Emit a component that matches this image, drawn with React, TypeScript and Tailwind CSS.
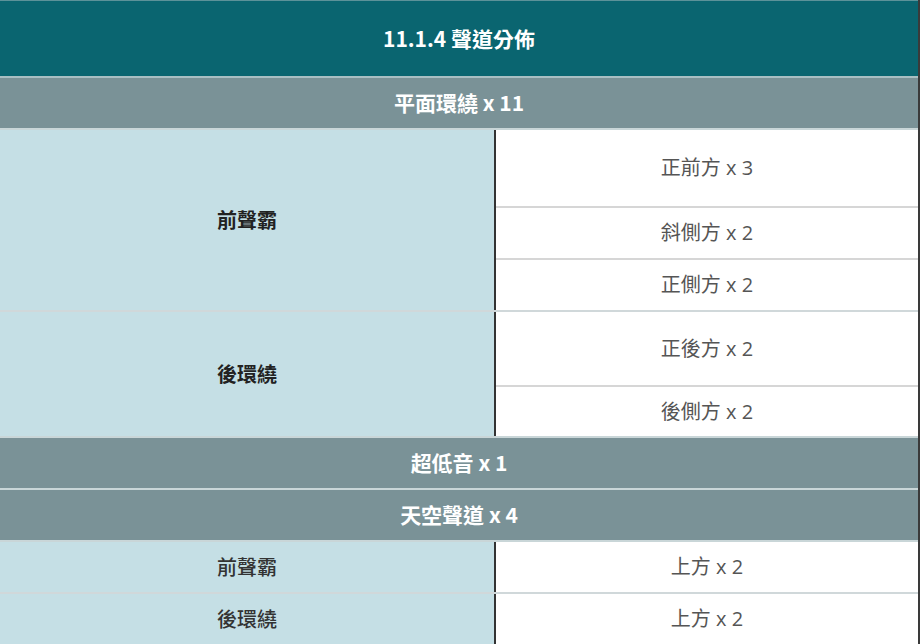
import React from "react";

const font = { fontFamily: '"Noto Sans CJK TC", "Noto Sans", sans-serif' };
const openFont = { fontFamily: '"Open Sans", "Noto Sans CJK TC", sans-serif' };

function Band({ text, h }: { text: string; h: string }) {
  return (
    <div className={`flex items-center justify-center bg-[#7a9297] border-b-2 border-[#c9d6d8] text-white font-bold text-[21px] ${h}`}>
      {text}
    </div>
  );
}

function RightCell({ text, h, last }: { text: string; h: string; last?: boolean }) {
  return (
    <div
      className={`flex items-center justify-center text-[#555] text-[20px] ${h} ${last ? "" : "border-b-2 border-[#d6d6d6]"}`}
      style={openFont}
    >
      {text}
    </div>
  );
}

export default function App() {
  return (
    <div className="w-[920px] h-[644px] overflow-hidden bg-white" style={font}>
      <div className="flex flex-col border-r-2 border-[#3a3a3a]">
        <div className="h-[78px] flex items-center justify-center bg-[#0a6570] border-t border-[#5c9299] border-b-2 border-b-[#a9bfc3] text-white font-bold text-[21px]">
          11.1.4 聲道分佈
        </div>
        <Band text="平面環繞 x 11" h="h-[52px]" />
        <div className="flex border-b-2 border-[#d0d8da]">
          <div className="w-[496px] shrink-0 bg-[#c5dfe5] border-r-2 border-[#333] flex items-center justify-center font-bold text-[#222] text-[20px]">
            前聲霸
          </div>
          <div className="flex-1 flex flex-col">
            <RightCell text="正前方 x 3" h="h-[78px]" />
            <RightCell text="斜側方 x 2" h="h-[52px]" />
            <RightCell text="正側方 x 2" h="h-[50px]" last />
          </div>
        </div>
        <div className="flex border-b-2 border-[#c9d6d8]">
          <div className="w-[496px] shrink-0 bg-[#c5dfe5] border-r-2 border-[#333] flex items-center justify-center font-bold text-[#222] text-[20px]">
            後環繞
          </div>
          <div className="flex-1 flex flex-col">
            <RightCell text="正後方 x 2" h="h-[75px]" />
            <RightCell text="後側方 x 2" h="h-[49px]" last />
          </div>
        </div>
        <Band text="超低音 x 1" h="h-[52px]" />
        <Band text="天空聲道 x 4" h="h-[52px]" />
        <div className="flex border-b-2 border-[#d0d8da] h-[52px]">
          <div className="w-[496px] shrink-0 bg-[#c5dfe5] border-r-2 border-[#333] flex items-center justify-center font-medium text-[#333] text-[20px]">
            前聲霸
          </div>
          <div className="flex-1 flex items-center justify-center text-[#555] text-[20px]" style={openFont}>上方 x 2</div>
        </div>
        <div className="flex h-[50px]">
          <div className="w-[496px] shrink-0 bg-[#c5dfe5] border-r-2 border-[#333] flex items-center justify-center font-medium text-[#333] text-[20px]">
            後環繞
          </div>
          <div className="flex-1 flex items-center justify-center text-[#555] text-[20px]" style={openFont}>上方 x 2</div>
        </div>
      </div>
    </div>
  );
}
